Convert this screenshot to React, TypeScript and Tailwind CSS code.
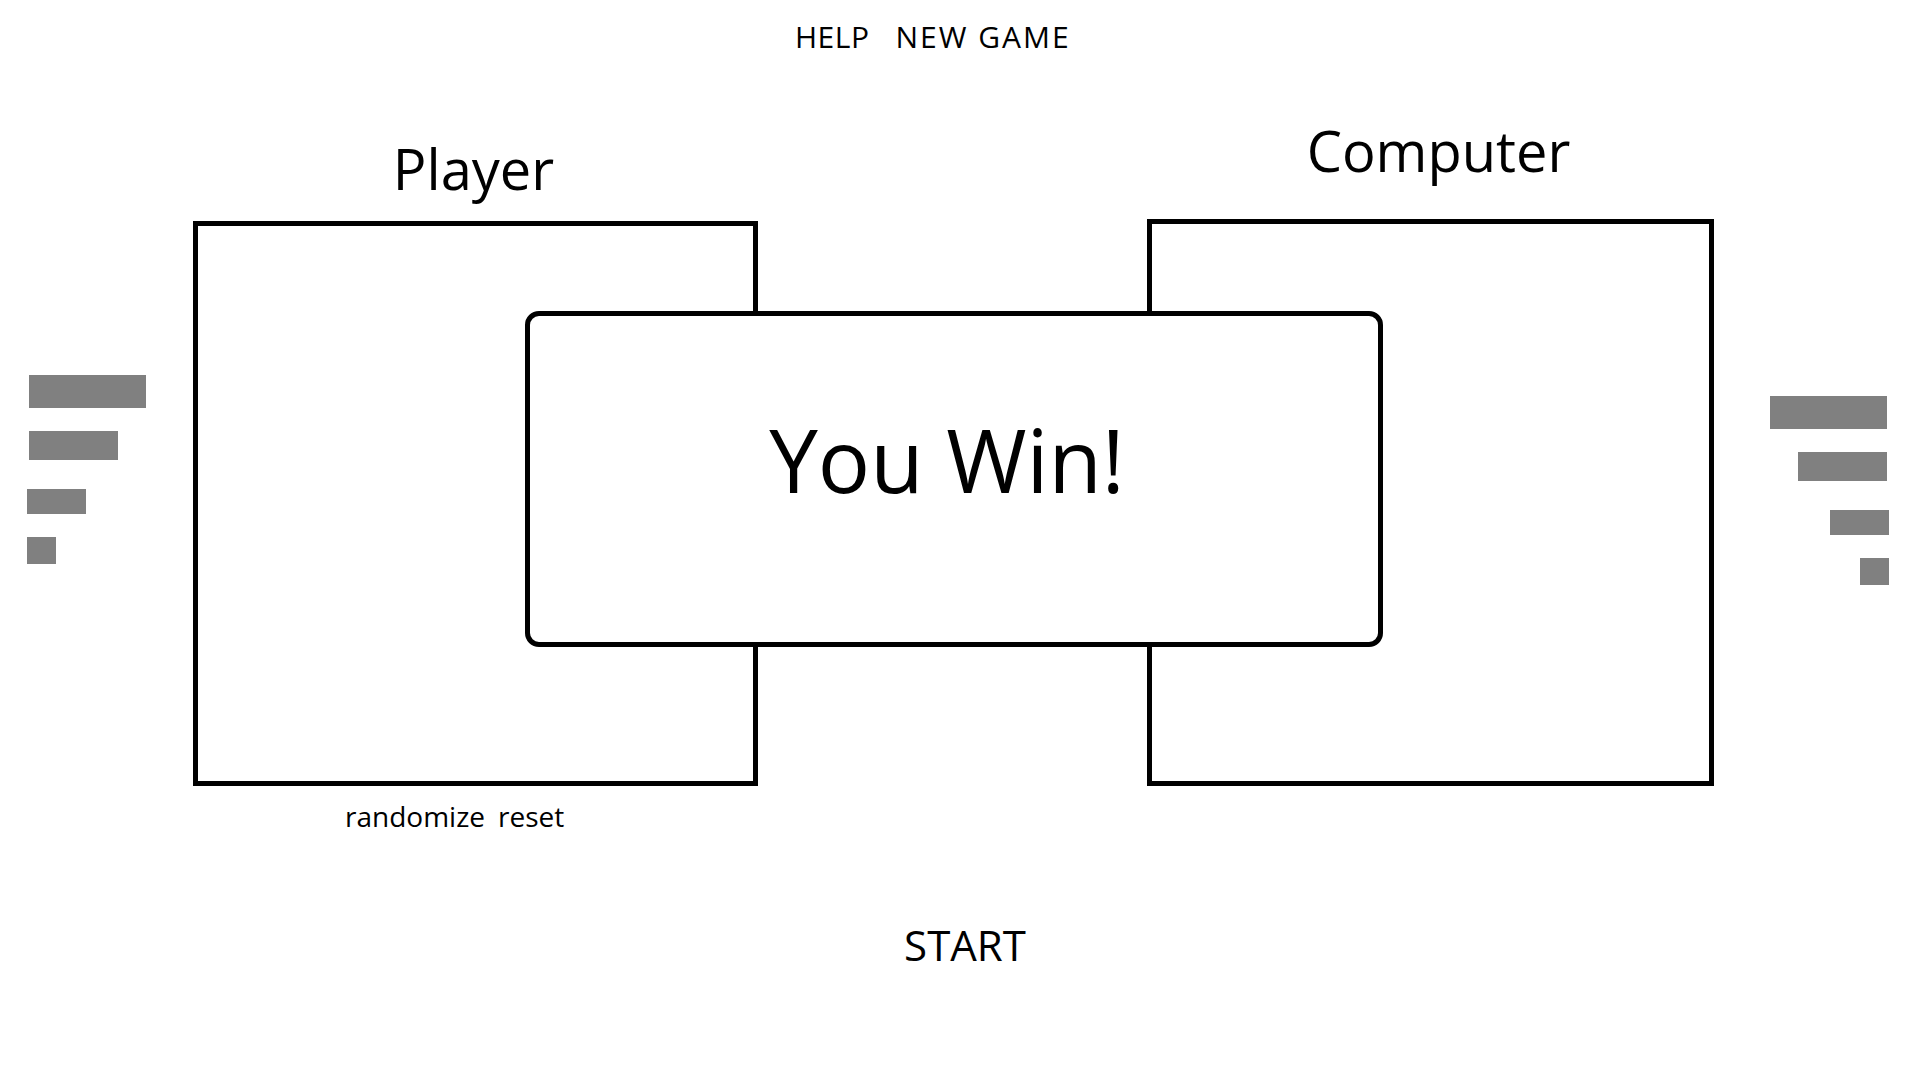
// Wireframe: two boards, score bars on the edges, "You Win!" dialog on top.
const LEFT_BARS = [
  'ml-[2px] h-[33px] w-[117px]',
  'ml-[2px] mt-[23px] h-[29px] w-[89px]',
  'mt-[29px] h-[25px] w-[59px]',
  'mt-[23px] h-[27px] w-[29px]',
];

const RIGHT_BARS = [
  'mr-[2px] h-[33px] w-[117px]',
  'mr-[2px] mt-[23px] h-[29px] w-[89px]',
  'mt-[29px] h-[25px] w-[59px]',
  'mt-[23px] h-[27px] w-[29px]',
];

function Bars({ bars, side }: { bars: string[]; side: 'left' | 'right' }) {
  return (
    <div
      className={
        side === 'left'
          ? 'mt-[323px] flex w-[119px] flex-col items-start'
          : 'ml-[56px] mt-[344px] flex w-[119px] flex-col items-end'
      }
    >
      {bars.map((b, i) => (
        <div key={i} className={`${b} bg-[#808080]`} />
      ))}
    </div>
  );
}

export default function App() {
  return (
    <div className="relative h-[1080px] w-[1920px] overflow-hidden bg-white font-['Open_Sans',sans-serif] text-black">
      {/* top menu */}
      <div className="flex gap-[26px] pl-[795px] pt-[22px] text-[30px] leading-none">
        <span className="tracking-[0.5px]">HELP</span>
        <span className="tracking-[2px]">NEW GAME</span>
      </div>

      <div className="flex items-start pl-[27px]">
        <Bars bars={LEFT_BARS} side="left" />

        {/* player board */}
        <div className="ml-[47px] mt-[88px] flex w-[565px] flex-col">
          <div className="pr-[4px] text-center text-[56px] leading-none">Player</div>
          <div className="mt-[25px] h-[565px] w-[565px] border-[5px] border-black" />
          <div className="mt-[16px] flex gap-[13px] pl-[152px] text-[28px] leading-none">
            <span>randomize</span>
            <span>reset</span>
          </div>
        </div>

        {/* computer board */}
        <div className="ml-[389px] mt-[70px] flex w-[567px] flex-col">
          <div className="pl-[16px] text-center text-[56px] leading-none">Computer</div>
          <div className="mt-[41px] h-[567px] w-[567px] border-[5px] border-black" />
        </div>

        <Bars bars={RIGHT_BARS} side="right" />
      </div>

      <div className="mt-[94px] flex justify-center pl-[10px] text-[42px] leading-none">
        <span>START</span>
      </div>

      {/* result dialog over the boards */}
      <div className="absolute left-[525px] top-[311px] flex h-[336px] w-[858px] justify-center rounded-[14px] border-[5px] border-black bg-white pr-[14px] pt-[100px]">
        <span className="text-[87px] leading-none">You Win!</span>
      </div>
    </div>
  );
}
